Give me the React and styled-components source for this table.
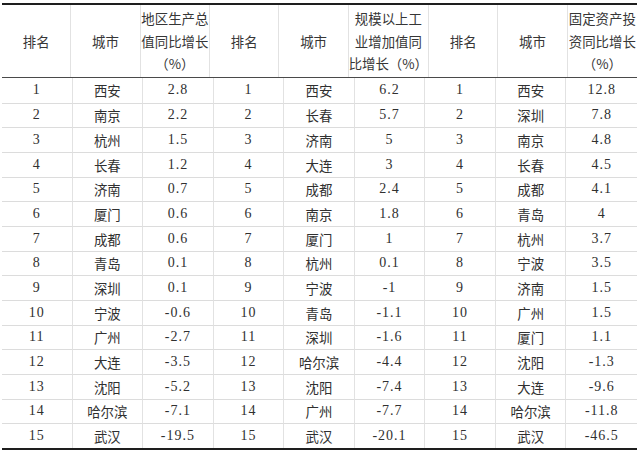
import React from 'react'
import styled, { createGlobalStyle } from 'styled-components'

const GlobalStyle = createGlobalStyle`
  html, body {
    margin: 0;
    padding: 0;
    background: #fff;
  }
  body {
    font-family: "Liberation Serif", "Noto Sans CJK SC", serif;
    color: #2b2b2b;
  }
`

const gdp = [
  ['西安', '2.8'], ['南京', '2.2'], ['杭州', '1.5'], ['长春', '1.2'], ['济南', '0.7'],
  ['厦门', '0.6'], ['成都', '0.6'], ['青岛', '0.1'], ['深圳', '0.1'], ['宁波', '-0.6'],
  ['广州', '-2.7'], ['大连', '-3.5'], ['沈阳', '-5.2'], ['哈尔滨', '-7.1'], ['武汉', '-19.5'],
]

const industry = [
  ['西安', '6.2'], ['长春', '5.7'], ['济南', '5'], ['大连', '3'], ['成都', '2.4'],
  ['南京', '1.8'], ['厦门', '1'], ['杭州', '0.1'], ['宁波', '-1'], ['青岛', '-1.1'],
  ['深圳', '-1.6'], ['哈尔滨', '-4.4'], ['沈阳', '-7.4'], ['广州', '-7.7'], ['武汉', '-20.1'],
]

const invest = [
  ['西安', '12.8'], ['深圳', '7.8'], ['南京', '4.8'], ['长春', '4.5'], ['成都', '4.1'],
  ['青岛', '4'], ['杭州', '3.7'], ['宁波', '3.5'], ['济南', '1.5'], ['广州', '1.5'],
  ['厦门', '1.1'], ['沈阳', '-1.3'], ['大连', '-9.6'], ['哈尔滨', '-11.8'], ['武汉', '-46.5'],
]

const headers = [
  ['排名'], ['城市'], ['地区生产总', '值同比增长', '（%）'],
  ['排名'], ['城市'], ['规模以上工', '业增加值同', '比增长（%）'],
  ['排名'], ['城市'], ['固定资产投', '资同比增长', '（%）'],
]

export default function App() {
  return (
    <>
      <GlobalStyle />
      <Page>
        <Sheet>
          <HeaderRow>
            {headers.map((lines, i) => (
              <HeaderCell key={i} $last={i === 8}>
                {lines.map((l, j) => <HeadLine key={j}>{l}</HeadLine>)}
              </HeaderCell>
            ))}
          </HeaderRow>
          <Body>
            {gdp.map((g, r) => {
              const cells = [
                [String(r + 1), 'num'], [g[0], 'city'], [g[1], 'num'],
                [String(r + 1), 'num'], [industry[r][0], 'city'], [industry[r][1], 'num'],
                [String(r + 1), 'num'], [invest[r][0], 'city'], [invest[r][1], 'num'],
              ]
              return cells.map(([text, kind], c) => (
                <Cell key={r + '-' + c} $last={c === 8} $first={r === 0} $kind={kind}>
                  {text}
                </Cell>
              ))
            })}
          </Body>
        </Sheet>
      </Page>
    </>
  )
}

const Page = styled.div`
  width: 640px;
  height: 452px;
  padding: 3px 3px 0 2px;
  box-sizing: border-box;
  overflow: hidden;
`

const Sheet = styled.div`
  width: 635px;
  border-top: 2px solid #1e1e1e;
  border-bottom: 2px solid #1e1e1e;
`

const HeaderRow = styled.div`
  display: grid;
  grid-template-columns: repeat(9, 1fr);
  height: 72px;
  border-bottom: 1px solid #4a4a4a;
`

const HeaderCell = styled.div`
  display: flex;
  flex-direction: column;
  justify-content: center;
  align-items: center;
  border-right: ${p => (p.$last ? 'none' : '1px solid #e2e2e2')};
  font-family: "Noto Sans CJK SC", sans-serif;
  font-size: 13.4px;
  color: #363636;
  white-space: nowrap;
`

const HeadLine = styled.div`
  line-height: 22.5px;
`

const Body = styled.div`
  display: grid;
  grid-template-columns: repeat(9, 1fr);
  grid-template-rows: repeat(15, 1fr);
  height: 370px;
`

const Cell = styled.div`
  display: flex;
  align-items: center;
  justify-content: center;
  box-sizing: border-box;
  border-right: ${p => (p.$last ? 'none' : '1px solid #e2e2e2')};
  border-top: ${p => (p.$first ? 'none' : '1px solid #dcdcdc')};
  white-space: nowrap;
  color: #303030;
  font-family: ${p => (p.$kind === 'city'
    ? '"Noto Sans CJK SC", sans-serif'
    : '"Liberation Serif", "Noto Sans CJK SC", serif')};
  font-size: ${p => (p.$kind === 'city' ? '13.4px' : '14px')};
  letter-spacing: ${p => (p.$kind === 'city' ? '0' : '1px')};
`
